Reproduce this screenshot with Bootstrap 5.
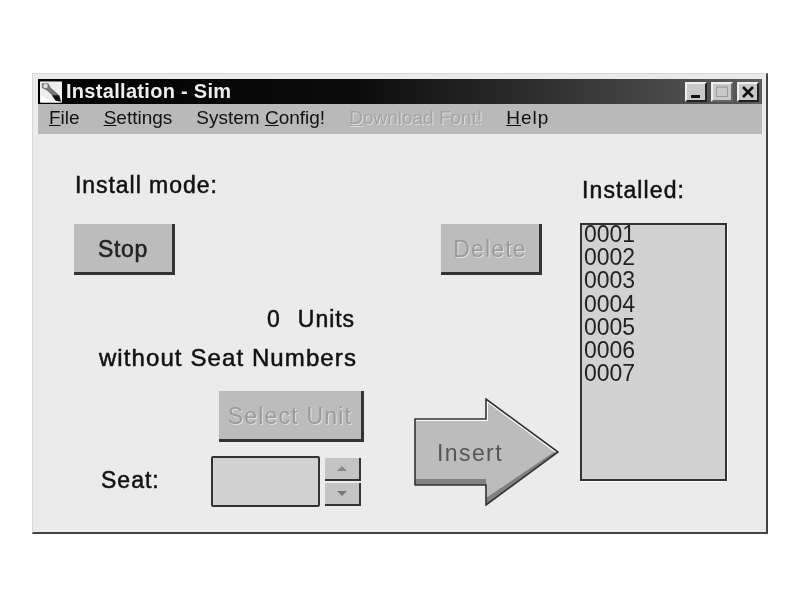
<!DOCTYPE html>
<html lang="en">
<head>
    <meta charset="UTF-8">
    <meta name="viewport" content="width=device-width, initial-scale=1.0">
    <title>Installation - Sim</title>
    <link href="https://cdn.jsdelivr.net/npm/bootstrap@5.3.0/dist/css/bootstrap.min.css" rel="stylesheet">
    <style>
        body { background: #fff; font-family: "Liberation Sans", Arial, sans-serif; color: #111; }
        .page-wrap { padding: 73px 0 0 32px; filter: blur(.5px); }
        .win-frame { width: 736px; height: 461px; background: #ebebeb; border: solid; border-width: 1px 2px 2px 1px;
            border-color: #d8d8d8 #444 #444 #d8d8d8; padding: 5px 4px 3px 5px; }
        .title-bar { height: 25px; background: linear-gradient(to right, #000 0%, #0c0c0c 45%, #5c5c5c 100%); color: #eee;
            font-size: 20px; font-weight: 700; letter-spacing: .3px; line-height: 25px; padding: 0 3px 0 2px; }
        .title-ico { width: 22px; height: 22px; flex: none; }
        .win-btn { width: 22px; height: 20px; background: #c8c8c8; border: solid 2px; border-color: #eee #222 #222 #eee; padding: 0; }
        .win-btn svg { display: block; width: 100%; height: 100%; }
        .win-btn-off { border-color: #eee #666 #666 #eee; }
        .menu-strip { height: 30px; background: #b9b9b9; font-size: 19px; line-height: 28px; padding-left: 11px; gap: 24px; }
        .menu-off { color: #a2a2a2; text-shadow: 1px 1px 0 #ddd; }
        .menu-help { letter-spacing: 1px; }
        .body-area { height: 396px; }
        .col-left { width: 328px; padding-left: 36px; }
        .col-mid { width: 214px; padding-top: 90px; }
        .col-right { width: 147px; }
        .lbl { font-size: 23px; letter-spacing: .95px; -webkit-text-stroke: .5px #111; line-height: 26px; }
        .mode-lbl { padding: 38px 0 0 1px; }
        .sim-btn { background: #bcbcbc; border: 0; border-right: 3px solid #333; border-bottom: 3px solid #333; box-shadow: -1px -1px 0 #e8e8e8;
            font-size: 23px; letter-spacing: .7px; color: #222; padding: 3px 0 0; display: block; -webkit-text-stroke: .5px #222; }
        .sim-btn:disabled { color: #9a9a9a; text-shadow: 1px 1px 0 #e0e0e0; letter-spacing: 1.2px; -webkit-text-stroke: 0; }
        .btn-stop { width: 101px; height: 51px; margin-top: 26px; }
        .btn-del { width: 101px; height: 51px; margin-left: 75px; }
        .btn-sel { width: 145px; height: 51px; margin: 20px 0 0 145px; }
        .units-line { margin: 31px 0 0; width: 281px; text-align: right; }
        .units-line span { margin-right: 17px; }
        .seats-line { margin-top: 13px; width: 283px; text-align: right; white-space: nowrap; font-size: 24px; letter-spacing: 1.1px; }
        .seat-row { margin-top: 14px; padding-left: 27px; height: 51px; }
        .seat-lbl { width: 110px; padding-top: 11px; line-height: 26px; letter-spacing: 1px; }
        .seat-box { width: 109px; height: 51px; background: #d2d2d2; border: 2px solid #333; border-radius: 2px; }
        .spin-wrap { margin-left: 5px; padding-top: 2px; gap: 2px; }
        .spin-btn { width: 36px; height: 23px; background: #c4c4c4; border-right: 2px solid #333; border-bottom: 2px solid #333; }
        .arrow-wrap { width: 145px; height: 108px; margin: 123px 0 0 48px; }
        .arrow-wrap svg { display: block; }
        .arrow-txt { left: 23px; top: 38px; font-size: 23px; letter-spacing: 1.4px; color: #555; }
        .inst-lbl { padding: 43px 0 0 2px; letter-spacing: 1.1px; }
        .inst-list { height: 258px; margin-top: 20px; background: #d2d2d2; border: 2px solid #333; box-shadow: 1px 1px 0 #fff;
            font-size: 23px; line-height: 23.2px; padding: 0 0 0 2px; list-style: none; color: #222; margin-bottom: 0; }
        .inst-list li:first-child { margin-top: -2px; }
    </style>
</head>
<body>
<div class="page-wrap">
    <div class="win-frame">
        <div class="title-bar d-flex align-items-center">
            <svg class="title-ico me-1" viewBox="0 0 24 23">
                <rect width="24" height="23" fill="#eee"/>
                <path d="M1 15 L12 21 L23 21 L23 23 L1 23Z" fill="#fff"/>
                <path d="M2 2 L9 2 L12 7 L20 14 L20 17 L15 17 L8 10 L2 7Z" fill="#777"/>
                <path d="M13 15 L21 15 L23 22 L17 21Z" fill="#111"/>
                <circle cx="6" cy="5" r="2.5" fill="#ddd"/>
            </svg>
            <span class="flex-grow-1">Installation - Sim</span>
            <div class="d-flex gap-1">
                <button class="win-btn" type="button" aria-label="Minimize">
                    <svg viewBox="0 0 18 16"><rect x="4" y="11" width="9" height="3" fill="#111"/></svg>
                </button>
                <button class="win-btn win-btn-off" type="button" aria-label="Maximize">
                    <svg viewBox="0 0 18 16"><rect x="3.5" y="2.5" width="11" height="10" fill="none" stroke="#999" stroke-width="1"/><rect x="3.5" y="2" width="11" height="2" fill="#aaa"/></svg>
                </button>
                <button class="win-btn" type="button" aria-label="Close">
                    <svg viewBox="0 0 18 16"><path d="M4 3 L14 13 M14 3 L4 13" stroke="#111" stroke-width="2.6"/></svg>
                </button>
            </div>
        </div>
        <div class="menu-strip d-flex">
            <span><u>F</u>ile</span>
            <span><u>S</u>ettings</span>
            <span>System <u>C</u>onfig!</span>
            <span class="menu-off"><u>D</u>ownload Font!</span>
            <span class="menu-help"><u>H</u>elp</span>
        </div>
        <div class="body-area d-flex">
            <div class="col-left">
                <div class="lbl mode-lbl">Install mode:</div>
                <button class="sim-btn btn-stop" type="button">Stop</button>
                <div class="lbl units-line">0<span></span>Units</div>
                <div class="lbl seats-line">without Seat Numbers</div>
                <button class="sim-btn btn-sel" type="button" disabled>Select Unit</button>
                <div class="seat-row d-flex">
                    <div class="lbl seat-lbl">Seat:</div>
                    <div class="seat-box"></div>
                    <div class="spin-wrap d-flex flex-column">
                        <div class="spin-btn d-flex align-items-center justify-content-center">
                            <svg width="12" height="7" viewBox="0 0 12 7"><path d="M6 1 L11 6 L1 6Z" fill="#888"/></svg>
                        </div>
                        <div class="spin-btn d-flex align-items-center justify-content-center">
                            <svg width="12" height="7" viewBox="0 0 12 7"><path d="M1 1 L11 1 L6 6Z" fill="#777"/></svg>
                        </div>
                    </div>
                </div>
            </div>
            <div class="col-mid">
                <button class="sim-btn btn-del" type="button" disabled>Delete</button>
                <div class="arrow-wrap position-relative">
                    <svg width="145" height="108" viewBox="0 0 145 108">
                        <path d="M1 21 H72 V1 L144 54 L72 107 V87 H1Z" fill="#bcbcbc"/>
                        <path d="M1 81 H72 V100 L140 54 L144 54 L72 107 V87 H1Z" fill="#808080"/>
                        <path d="M2 22 H73 V3 L142 54" fill="none" stroke="#fafafa" stroke-width="2"/>
                        <path d="M1 21 H72 V1 L144 54 L72 107 V87 H1Z" fill="none" stroke="#333" stroke-width="1.6"/>
                    </svg>
                    <span class="arrow-txt position-absolute">Insert</span>
                </div>
            </div>
            <div class="col-right">
                <div class="lbl inst-lbl">Installed:</div>
                <ul class="inst-list">
                    <li>0001</li>
                    <li>0002</li>
                    <li>0003</li>
                    <li>0004</li>
                    <li>0005</li>
                    <li>0006</li>
                    <li>0007</li>
                </ul>
            </div>
        </div>
    </div>
</div>
<script src="https://cdn.jsdelivr.net/npm/bootstrap@5.3.0/dist/js/bootstrap.bundle.min.js"></script>
</body>
</html>
